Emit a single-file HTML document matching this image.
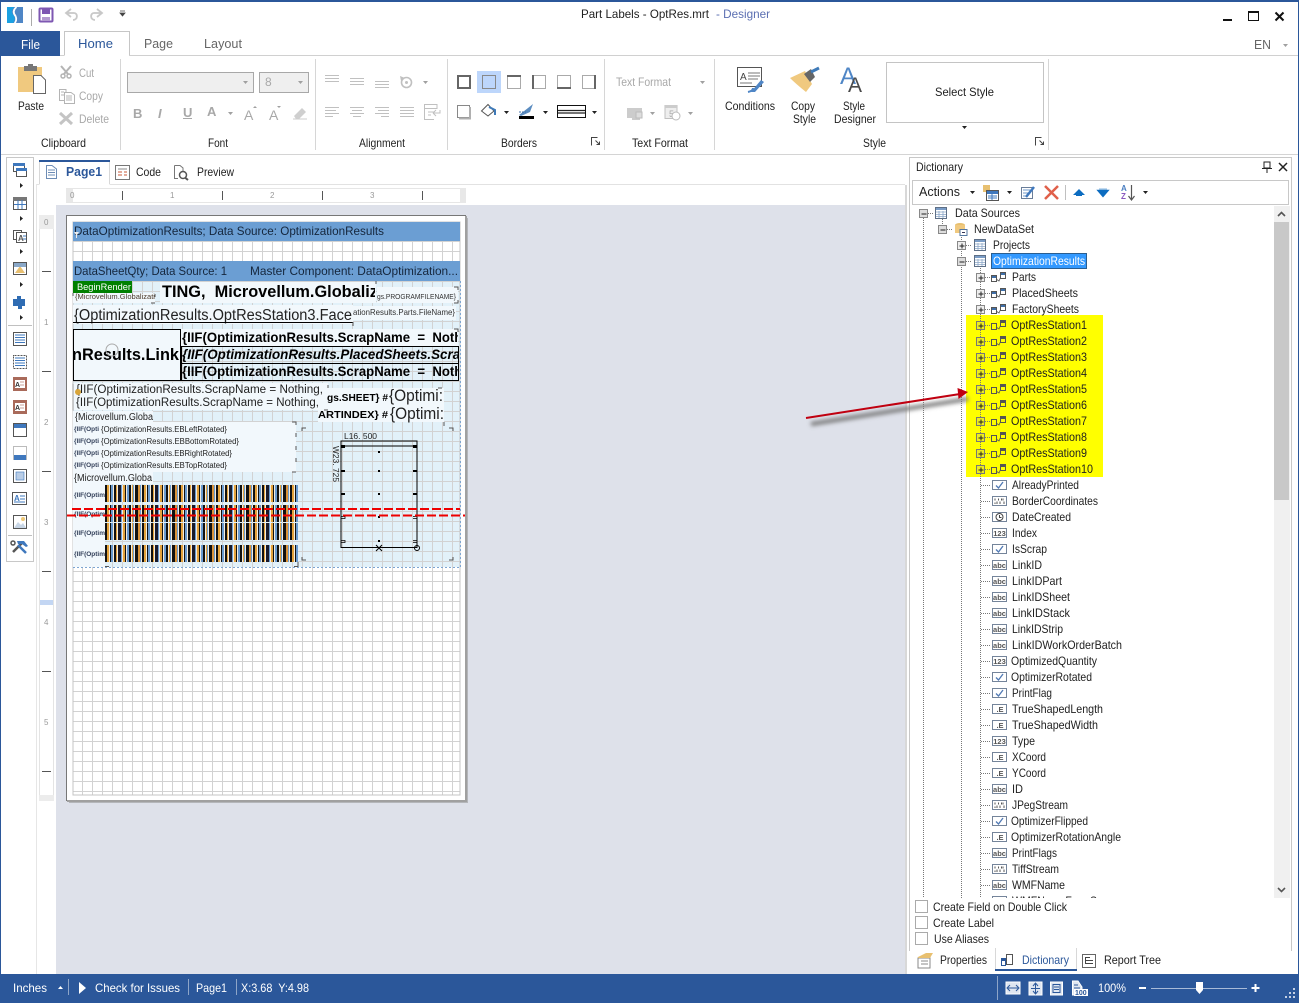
<!DOCTYPE html>
<html><head><meta charset="utf-8"><title>Part Labels - OptRes.mrt - Designer</title>
<style>
html,body{margin:0;padding:0;background:#fff;width:1299px;height:1003px;overflow:hidden}
svg{display:block;position:absolute;left:0;top:0}
text{font-family:"Liberation Sans",sans-serif;font-size:12px;fill:#1e1e1e;white-space:pre}
.g{fill:#a8a8a8}.w{fill:#fff}.b{font-weight:bold}
.gi{fill:none;stroke:#b4b4b4;stroke-width:1}
.dot{stroke:#777;stroke-width:1;stroke-dasharray:1 1;fill:none}
</style></head><body>
<svg width="1299" height="1003" viewBox="0 0 1299 1003" xmlns="http://www.w3.org/2000/svg">
<defs>
<pattern id="grid" x="2" y="1" width="10" height="10" patternUnits="userSpaceOnUse"><path d="M0.5 0V10M0 .5H10" stroke="#d2d2d2" fill="none"/></pattern>
<pattern id="bar" x="105" y="0" width="37" height="80" patternUnits="userSpaceOnUse">
<rect width="37" height="80" fill="#f4ede0"/>
<rect x="0" width="2" height="80" fill="#111"/><rect x="2" width="2" height="80" fill="#e3a23c"/><rect x="5" width="1" height="80" fill="#111"/><rect x="6" width="2" height="80" fill="#6a9bd0"/><rect x="9" width="2" height="80" fill="#111"/><rect x="11" width="1" height="80" fill="#e3a23c"/><rect x="13" width="3" height="80" fill="#1a1a2a"/><rect x="16" width="1" height="80" fill="#6a9bd0"/><rect x="18" width="2" height="80" fill="#e3a23c"/><rect x="20" width="1" height="80" fill="#111"/><rect x="22" width="2" height="80" fill="#6a9bd0"/><rect x="24" width="2" height="80" fill="#111"/><rect x="27" width="1" height="80" fill="#e3a23c"/><rect x="28" width="1" height="80" fill="#6a9bd0"/><rect x="30" width="3" height="80" fill="#111"/><rect x="33" width="2" height="80" fill="#d9933a"/><rect x="35" width="1" height="80" fill="#6a9bd0"/>
</pattern>
<clipPath id="treeclip"><rect x="912" y="205" width="362" height="693"/></clipPath>
<clipPath id="c1"><rect x="160" y="281" width="215" height="22"/></clipPath>
<clipPath id="c2"><rect x="73" y="345" width="106" height="20"/></clipPath>
<clipPath id="c3"><rect x="181" y="329" width="277" height="52"/></clipPath>
<clipPath id="c4"><rect x="316" y="385" width="128" height="40"/></clipPath>
<filter id="bl" x="-10%" y="-200%" width="120%" height="500%"><feGaussianBlur stdDeviation="2"/></filter>

<symbol id="plus" overflow="visible"><rect x="-4" y="-4" width="8" height="8" fill="#eee" stroke="#888"/><path d="M-2 .5H3M.5 -2V3" stroke="#222"/></symbol>
<symbol id="plusy" overflow="visible"><rect x="-4" y="-4" width="8" height="8" fill="#ecec20" stroke="#777"/><path d="M-2 .5H3M.5 -2V3" stroke="#222"/></symbol>
<symbol id="minus" overflow="visible"><rect x="-4" y="-4" width="8" height="8" fill="#ddd" stroke="#888"/><path d="M-2 .5H3" stroke="#222"/></symbol>
<symbol id="tbl" overflow="visible"><rect x=".5" y="-5.5" width="11" height="11" fill="#fff" stroke="#5e6f86"/><rect x="1" y="-5" width="10" height="2" fill="#7a9cc6"/><path d="M1 -1H11M1 1.500H11M1 3.500H11M4 -2V5M8 -2V5" stroke="#8ba6c8" stroke-width=".8"/></symbol>
<symbol id="rel" overflow="visible"><rect x=".5" y="-1.500" width="5" height="6" fill="#fff" stroke="#555"/><rect x="1" y="-1" width="4" height="2" fill="#3f6fa8"/><path d="M5 2L8 4L11 -3" stroke="#555" fill="none" stroke-width=".8"/><rect x="9.500" y="-4.500" width="5" height="6" fill="#fff" stroke="#555"/><rect x="10" y="-4" width="4" height="2" fill="#3f6fa8"/></symbol>
<symbol id="rely" overflow="visible"><rect x=".5" y="-1.500" width="5" height="6" fill="#ffff00" stroke="#555"/><path d="M5 2L8 4L11 -3" stroke="#555" fill="none" stroke-width=".8"/><rect x="9.500" y="-4.500" width="5" height="6" fill="#ffff00" stroke="#555"/><rect x="10" y="-4" width="4" height="2" fill="#555"/></symbol>
<symbol id="fb" overflow="visible"><rect x=".5" y="-4.500" width="14" height="9" fill="#fff" stroke="#74849a"/></symbol>
<symbol id="chk" overflow="visible"><use href="#fb"/><path d="M4 .5L6.500 3L11 -3" stroke="#5079b4" stroke-width="1.300" fill="none"/></symbol>
<symbol id="abc" overflow="visible"><use href="#fb"/><text x="7.500" y="2.800" text-anchor="middle" style="font-size:7.500px;font-weight:bold;fill:#555">abc</text></symbol>
<symbol id="n123" overflow="visible"><use href="#fb"/><text x="7.500" y="2.800" text-anchor="middle" style="font-size:7.500px;font-weight:bold;fill:#555">123</text></symbol>
<symbol id="e" overflow="visible"><use href="#fb"/><text x="8" y="2.800" text-anchor="middle" style="font-size:7.500px;font-weight:bold;fill:#555">.E</text></symbol>
<symbol id="bin" overflow="visible"><use href="#fb"/><path d="M3 -2.500V-.5M6.500 -2.500V-.5M11 -2.500V-.5M5 .5V3M8 .5V3M12 .5V3M3 1.500V3M9.500 -2.500V-.5" stroke="#555"/></symbol>
<symbol id="dt" overflow="visible"><use href="#fb"/><circle cx="7.500" cy="0" r="3.500" fill="#fff" stroke="#444"/><path d="M7.500 -2V.5H9.500" stroke="#444" fill="none"/></symbol>
<symbol id="ca" overflow="visible"><path d="M0 0H5L2.500 3Z" fill="#222"/></symbol>
<symbol id="cag" overflow="visible"><path d="M0 0H5L2.500 3Z" fill="#a0a0a0"/></symbol>
<symbol id="cbtn" overflow="visible"><path d="M0 0V-8H6M4 -5L8 -1M5 -1H8V-4" fill="none" stroke="#444"/></symbol>
</defs>

<!-- window frame -->
<rect x="0" y="0" width="1299" height="2" fill="#2b579a"/>
<rect x="0" y="0" width="1" height="1003" fill="#2b579a"/>
<rect x="1298" y="0" width="1" height="1003" fill="#2b579a"/>

<!-- quick access -->
<rect x="7" y="7" width="16" height="16" fill="#4f86c6"/>
<path d="M7 7H14C11 11 11.500 13 14 16C15.500 19 14 22 13 23H7Z" fill="#1ba1e2"/>
<path d="M16.500 7C13 10 13 13 15.500 16C17 19 16 22 14.500 23" fill="none" stroke="#fff" stroke-width="1.800"/>
<rect x="31" y="9" width="1" height="17" fill="#aaa"/>
<rect x="39.500" y="8.500" width="13" height="13" rx="1" fill="#fff" stroke="#7e57b2" stroke-width="2"/>
<rect x="42" y="9" width="8" height="5" fill="#7e57b2"/><rect x="42" y="17" width="8" height="4" fill="#b39ad0"/>
<path d="M71 9L66 13L71 17M66 13H74C78 13 78 20 73 20" fill="none" stroke="#c8c8c8" stroke-width="1.800"/>
<path d="M97 9L102 13L97 17M102 13H94C90 13 90 20 95 20" fill="none" stroke="#c8c8c8" stroke-width="1.800"/>
<path d="M120 11H125M120 13H125L122.500 16Z" stroke="#444" fill="#444" stroke-width=".8"/>

<text x="581" y="18" textLength="128" lengthAdjust="spacingAndGlyphs">Part Labels - OptRes.mrt</text>
<text x="716" y="18" textLength="54" lengthAdjust="spacingAndGlyphs" style="fill:#5b6fb2">- Designer</text>

<!-- window buttons -->
<rect x="1223" y="19" width="9" height="2" fill="#111"/>
<rect x="1248.500" y="11.500" width="10" height="9" fill="none" stroke="#111"/><rect x="1248" y="11" width="11" height="2" fill="#111"/>
<path d="M1275.500 12.500L1283.500 20.500M1283.500 12.500L1275.500 20.500" stroke="#111" stroke-width="2"/>

<!-- ribbon tabs -->
<path d="M64.500 55.500V31.500H129.500V55.500" fill="#fff" stroke="#c6c6c6"/>
<rect x="60" y="55" width="4" height="1" fill="#d0d0d0"/><rect x="129" y="55" width="1169" height="1" fill="#d0d0d0"/>
<rect x="1" y="31" width="59" height="25" fill="#2b579a"/>
<text x="21" y="49" class="w" textLength="19" lengthAdjust="spacingAndGlyphs" style="font-size:13px">File</text>
<text x="78" y="48" textLength="35" lengthAdjust="spacingAndGlyphs" style="font-size:13px;fill:#2b579a">Home</text>
<text x="144" y="48" textLength="29" lengthAdjust="spacingAndGlyphs" style="font-size:13px;fill:#666">Page</text>
<text x="204" y="48" textLength="38" lengthAdjust="spacingAndGlyphs" style="font-size:13px;fill:#666">Layout</text>
<text x="1254" y="49" textLength="17" lengthAdjust="spacingAndGlyphs" style="font-size:13px;fill:#666">EN</text>
<use href="#cag" x="1283" y="44"/>

<rect x="1" y="154" width="1297" height="1" fill="#d4d4d4"/>
<g fill="#d6d6d6"><rect x="120" y="59" width="1" height="91"/><rect x="315" y="59" width="1" height="91"/><rect x="447" y="59" width="1" height="91"/><rect x="604" y="59" width="1" height="91"/><rect x="714" y="59" width="1" height="91"/><rect x="1048" y="59" width="1" height="91"/></g>

<!-- clipboard group -->
<rect x="18" y="67" width="24" height="25" fill="#f0c97f"/>
<rect x="24" y="66" width="13" height="5" fill="#777"/><rect x="28" y="64" width="5" height="3" fill="#777"/>
<path d="M33.500 75.500H41L45.500 80V93.500H33.500Z" fill="#fff" stroke="#666"/>
<text x="18" y="110" textLength="26" lengthAdjust="spacingAndGlyphs">Paste</text>
<g class="gi"><circle cx="63" cy="76" r="2" stroke-width="1.500"/><circle cx="69" cy="76" r="2" stroke-width="1.500"/><path d="M61 66L68 74M71 66L64 74" stroke-width="2"/></g>
<text x="79" y="77" class="g" textLength="15" lengthAdjust="spacingAndGlyphs">Cut</text>
<g class="gi"><path d="M59.500 89.500H66V100.500H59.500Z"/><path d="M64.500 92.500H71L74.500 95V103.500H64.500Z" fill="#fff"/><path d="M61 92H64M61 95H64M66 96H72M66 98H72M66 100H72"/></g>
<text x="79" y="100" class="g" textLength="24" lengthAdjust="spacingAndGlyphs">Copy</text>
<path d="M60 113L72 124M72 113L60 124" stroke="#c4c4c4" stroke-width="3"/>
<text x="79" y="123" class="g" textLength="30" lengthAdjust="spacingAndGlyphs">Delete</text>
<text x="41" y="147" textLength="45" lengthAdjust="spacingAndGlyphs">Clipboard</text>

<!-- font group -->
<rect x="127.500" y="72.500" width="126" height="20" fill="#efefef" stroke="#a8a8a8"/>
<use href="#cag" x="243" y="81"/>
<rect x="259.500" y="72.500" width="49" height="20" fill="#efefef" stroke="#a8a8a8"/>
<text x="265" y="86" class="g">8</text><use href="#cag" x="298" y="81"/>
<text x="133" y="118" class="g b" style="font-size:13px">B</text>
<text x="158" y="118" class="g b" style="font-size:13px;font-style:italic">I</text>
<text x="183" y="117" class="g b" style="font-size:13px">U</text><rect x="183" y="118" width="9" height="1" fill="#a8a8a8"/>
<text x="207" y="116" class="g b" style="font-size:13px">A</text><use href="#cag" x="228" y="112"/>
<text x="244" y="120" class="g" style="font-size:14px">A</text><path d="M253 108L255 106L257 108Z" fill="#a0a0a0"/>
<text x="269" y="120" class="g" style="font-size:14px">A</text><path d="M277 106L279 108L281 106Z" fill="#a0a0a0"/>
<path d="M294 116L302 108L306 112L299 119H296Z" fill="#cfcfcf"/><path d="M293 119H307" stroke="#ccc"/>
<text x="208" y="147" textLength="20" lengthAdjust="spacingAndGlyphs">Font</text>

<!-- alignment group -->
<g stroke="#c0c0c0">
<path d="M325 75.500H339M325 78.500H339M325 81.500H339"/>
<path d="M350 78.500H364M350 81.500H364M350 84.500H364"/>
<path d="M375 81.500H389M375 84.500H389M375 87.500H389"/>
<path d="M325 107.500H339M325 110.500H336M325 113.500H339M325 116.500H333"/>
<path d="M350 107.500H364M352 110.500H362M350 113.500H364M353 116.500H361"/>
<path d="M375 107.500H389M378 110.500H389M375 113.500H389M381 116.500H389"/>
<path d="M400 107.500H414M400 110.500H414M400 113.500H414M400 116.500H414"/>
</g>
<circle cx="406.500" cy="82.500" r="5" fill="none" stroke="#c0c0c0" stroke-width="1.600"/><circle cx="406.500" cy="82.500" r="1.500" fill="#c0c0c0"/><path d="M400 76L405 78L401 81Z" fill="#c0c0c0"/>
<use href="#cag" x="423" y="81"/>
<path d="M424.500 104.500H437V108.500H424.500ZM424.500 108.500V119.500H434M428 112H434M428 115H431M433 113H440V110M433 113L436 110M433 113L436 116" fill="none" stroke="#c0c0c0"/>
<text x="359" y="147" textLength="46" lengthAdjust="spacingAndGlyphs">Alignment</text>

<!-- borders group -->
<rect x="477" y="71" width="24" height="22" fill="#bdd6fb"/>
<rect x="458" y="76" width="12" height="12" fill="none" stroke="#666" stroke-width="2"/>
<rect x="482.500" y="75.500" width="13" height="13" fill="none" stroke="#888"/>
<rect x="507.500" y="75.500" width="13" height="13" fill="none" stroke="#aaa"/><rect x="507" y="75" width="14" height="2" fill="#666"/>
<rect x="532.500" y="75.500" width="13" height="13" fill="none" stroke="#aaa"/><rect x="532" y="75" width="2" height="14" fill="#666"/>
<rect x="557.500" y="75.500" width="13" height="13" fill="none" stroke="#aaa"/><rect x="557" y="87" width="14" height="2" fill="#666"/>
<rect x="582.500" y="75.500" width="13" height="13" fill="none" stroke="#aaa"/><rect x="594" y="75" width="2" height="14" fill="#666"/>
<rect x="457.500" y="105.500" width="12" height="12" fill="none" stroke="#888"/><path d="M470 107V118.500H459" fill="none" stroke="#b0b0b0" stroke-width="2"/>
<path d="M481.500 111L488 104.500L494 111L488 116Z" fill="#fff" stroke="#555"/><path d="M489 107L495 110V115" fill="none" stroke="#3f7ab8" stroke-width="2"/>
<use href="#ca" x="504" y="111"/>
<path d="M519 115L528 108L533 104L530 112L521 116Z" fill="#5b8cc0"/><path d="M519 112H526" stroke="#3f6fa8" stroke-dasharray="2 1"/>
<rect x="519" y="116" width="15" height="3" fill="#000"/>
<use href="#ca" x="543" y="111"/>
<rect x="557.500" y="105.500" width="28" height="12" fill="#fff" stroke="#111"/><path d="M558 110.500H585M558 113H585" stroke="#222" stroke-width="1.200"/>
<use href="#ca" x="592" y="111"/>
<text x="501" y="147" textLength="36" lengthAdjust="spacingAndGlyphs">Borders</text>
<use href="#cbtn" x="591.500" y="145.500"/>

<!-- text format -->
<text x="616" y="86" class="g" textLength="55" lengthAdjust="spacingAndGlyphs">Text Format</text>
<use href="#cag" x="700" y="81"/>
<rect x="627" y="108" width="15" height="10" fill="#ccc"/><path d="M632 119H640" stroke="#ccc" stroke-width="2"/><rect x="636" y="112" width="6" height="6" fill="#ddd" stroke="#bbb"/>
<use href="#cag" x="650" y="112"/>
<rect x="665" y="105.500" width="12" height="13" fill="#eee" stroke="#c0c0c0"/><rect x="665" y="105" width="12" height="3" fill="#ccc"/><text x="669" y="117" style="font-size:9px;fill:#aaa">5</text><circle cx="676" cy="116" r="4" fill="#fff" stroke="#bbb"/>
<use href="#cag" x="688" y="112"/>
<text x="632" y="147" textLength="56" lengthAdjust="spacingAndGlyphs">Text Format</text>

<!-- style group -->
<rect x="737.500" y="67.500" width="24" height="19" fill="#fff" stroke="#555"/>
<text x="740" y="80" style="font-size:10px;fill:#444">A</text><path d="M748 73H760M748 76H760M748 79H758M740 83H752" stroke="#777"/>
<path d="M751 92L761 80L764 82L755 92Z" fill="#4f86c6"/><path d="M748 92Q753 91 753 88" stroke="#4f86c6" fill="none" stroke-width="2"/>
<text x="725" y="110" textLength="50" lengthAdjust="spacingAndGlyphs">Conditions</text>
<path d="M790 78L805 71L812 84L806 92Q796 84 790 78Z" fill="#f0c97f"/>
<path d="M804 74L811 69L815 77L810 82Z" fill="#666"/><path d="M811 72L819 68" stroke="#3f7ab8" stroke-width="3"/>
<text x="791" y="110" textLength="24" lengthAdjust="spacingAndGlyphs">Copy</text>
<text x="793" y="123" textLength="23" lengthAdjust="spacingAndGlyphs">Style</text>
<text x="840" y="84" style="font-size:24px;fill:#4f86c6">A</text>
<text x="848" y="92" style="font-size:21px;fill:#4a4a4a">A</text>
<text x="843" y="110" textLength="22" lengthAdjust="spacingAndGlyphs">Style</text>
<text x="834" y="123" textLength="42" lengthAdjust="spacingAndGlyphs">Designer</text>
<rect x="886.500" y="62.500" width="157" height="60" fill="#fff" stroke="#c4c4c4"/>
<text x="935" y="96" textLength="59" lengthAdjust="spacingAndGlyphs">Select Style</text>
<use href="#ca" x="962" y="126"/>
<text x="863" y="147" textLength="23" lengthAdjust="spacingAndGlyphs">Style</text>
<use href="#cbtn" x="1035.500" y="145.500"/>

<!-- left vertical tool strip -->
<rect x="6.500" y="157.500" width="27" height="404" fill="#fff" stroke="#c8c8c8"/>
<rect x="8" y="325" width="24" height="1" fill="#c0c0c0"/><rect x="8" y="535" width="24" height="1" fill="#c0c0c0"/>
<g fill="#222"><path d="M20 183L23 185.500L20 188Z"/><path d="M20 216L23 218.500L20 221Z"/><path d="M20 249L23 251.500L20 254Z"/><path d="M20 282L23 284.500L20 287Z"/><path d="M20 315L23 317.500L20 320Z"/></g>
<rect x="13.500" y="163.500" width="11" height="8" fill="#fff" stroke="#555"/><rect x="13" y="163" width="12" height="3" fill="#3f78bd"/>
<rect x="16.500" y="168.500" width="10" height="8" fill="#fff" stroke="#555"/><rect x="16" y="168" width="11" height="3" fill="#3f78bd"/>
<rect x="13.500" y="197.500" width="13" height="12" fill="#fff" stroke="#555"/><rect x="13" y="197" width="14" height="4" fill="#777"/><path d="M14 204.500H26M18 200V209M22 200V209" stroke="#3f78bd"/>
<rect x="13.500" y="230.500" width="8" height="9" fill="#fff" stroke="#555"/><rect x="16.500" y="232.500" width="10" height="10" fill="#fff" stroke="#555"/><text x="18" y="241" style="font-size:8px;font-weight:bold;fill:#555">A</text><path d="M23 236H26M23 239H26" stroke="#3f78bd"/>
<rect x="13.500" y="262.500" width="13" height="12" fill="#fff" stroke="#555"/><path d="M15 273L20 266L25 273Z" fill="#e8bf70"/><rect x="14" y="263" width="12" height="4" fill="#8aa8c8"/>
<path d="M13 299H17V296H21V299H25V306H22V309H18V306H13Z" fill="#2f6cb3"/>
<g>
<rect x="13.500" y="332.500" width="13" height="13" fill="#fff" stroke="#555"/><path d="M15 335H25M15 337.500H25M15 340H25M15 342.500H25" stroke="#3f78bd"/>
<rect x="13.500" y="355.500" width="13" height="13" fill="#fff" stroke="#555" stroke-dasharray="1 .5"/><path d="M15 358H25M15 360.500H25M15 363H25M15 365.500H25" stroke="#3f78bd"/>
<rect x="13" y="377" width="14" height="14" fill="#a96a5a"/><rect x="15" y="380" width="10" height="8" fill="#fff"/><text x="15" y="387" style="font-size:7px;font-weight:bold;fill:#333">A</text><path d="M20 382H24M20 385H24" stroke="#c9a098"/>
<rect x="13" y="400" width="14" height="14" fill="#a96a5a"/><rect x="15" y="403" width="10" height="8" fill="#fff"/><text x="15" y="410" style="font-size:7px;font-weight:bold;fill:#333">A</text><path d="M20 405H24M20 408H24" stroke="#c9a098"/>
<rect x="13.500" y="423.500" width="13" height="13" fill="#fff" stroke="#555"/><rect x="14" y="424" width="12" height="4" fill="#3f78bd"/>
<rect x="13.500" y="446.500" width="13" height="13" fill="#fff" stroke="#bbb"/><rect x="14" y="455" width="12" height="5" fill="#3f78bd"/>
<rect x="13.500" y="469.500" width="13" height="13" fill="#fff" stroke="#555"/><rect x="16" y="472" width="8" height="8" fill="#b9cde6" stroke="#3f78bd" stroke-width=".6"/>
<rect x="12.500" y="492.500" width="14" height="12" fill="#fff" stroke="#555"/><text x="14" y="501" style="font-size:8px;font-weight:bold;fill:#3f78bd">A</text><path d="M20 496H25M20 499H25M14 502H25" stroke="#3f78bd"/>
<rect x="13.500" y="515.500" width="13" height="13" fill="#fff" stroke="#555"/><path d="M14 528L18 522L21 525L23 523L26 528Z" fill="#c8d6e6"/><circle cx="23" cy="519" r="2" fill="#eec878"/>
<path d="M13 552L22 543" stroke="#555" stroke-width="2.500"/><path d="M18 545L26 553" stroke="#3f78bd" stroke-width="2.500"/><path d="M17 541H24L28 546L26 547L22 544H18Z" fill="#3f78bd"/><circle cx="13" cy="543" r="2" fill="none" stroke="#555" stroke-width="1.500"/>
</g>

<!-- doc tabs -->
<rect x="36" y="184" width="869" height="1" fill="#e2e2e2"/>
<rect x="36" y="184" width="1" height="790" fill="#e6e6e6"/>
<path d="M39.500 184V161H109.500V184" fill="#fff" stroke="#d8d8d8"/>
<rect x="39" y="160" width="71" height="2" fill="#2b579a"/>
<rect x="39.500" y="184" width="70" height="1" fill="#fff"/>
<path d="M46.500 165.500H52L56.500 169V178.500H46.500Z" fill="#fff" stroke="#6d8cb5"/><path d="M48 170H55M48 172.500H55M48 175H55" stroke="#6d8cb5"/>
<text x="66" y="176" class="b" textLength="36" lengthAdjust="spacingAndGlyphs" style="fill:#2b579a;font-size:12.500px">Page1</text>
<rect x="115.500" y="165.500" width="14" height="14" fill="#fff" stroke="#777"/><path d="M118 169H127" stroke="#888"/><path d="M118 172H122M124 172H127M118 175H122M124 175H127" stroke="#c85a3a"/>
<text x="136" y="176" textLength="25" lengthAdjust="spacingAndGlyphs">Code</text>
<path d="M174.500 165.500H180L183 168V171M174.500 165.500V178.500H178" fill="none" stroke="#777"/><circle cx="183" cy="175" r="3.500" fill="#fff" stroke="#555" stroke-width="1.500"/><path d="M185.500 178L188 180" stroke="#555" stroke-width="2"/>
<text x="197" y="176" textLength="37" lengthAdjust="spacingAndGlyphs">Preview</text>

<!-- horizontal ruler -->
<rect x="66" y="188" width="400" height="15" fill="#fff"/>
<rect x="66" y="188" width="7" height="15" fill="#e8e8e8"/>
<rect x="66" y="188" width="400" height="1" fill="#e6e6e6"/><rect x="66" y="202" width="400" height="1" fill="#e6e6e6"/>
<rect x="460" y="188" width="6" height="15" fill="#e8e8e8"/>
<g fill="#555"><rect x="122" y="191" width="1" height="9"/><rect x="222" y="191" width="1" height="9"/><rect x="322" y="191" width="1" height="9"/><rect x="422" y="191" width="1" height="9"/></g>
<text x="70" y="198" style="font-size:8px;fill:#999">0</text><text x="170" y="198" style="font-size:8px;fill:#999">1</text><text x="270" y="198" style="font-size:8px;fill:#999">2</text><text x="370" y="198" style="font-size:8px;fill:#999">3</text>

<!-- canvas -->
<rect x="56" y="205" width="849" height="769" fill="#dee1ea"/>
<rect x="905" y="185" width="2" height="789" fill="#d8d8d8"/>
<!-- vertical ruler -->
<rect x="39" y="215" width="14" height="586" fill="#fff"/>
<rect x="39" y="215" width="1" height="586" fill="#e4e4e4"/><rect x="53" y="215" width="1" height="586" fill="#e4e4e4"/>
<rect x="39" y="215" width="15" height="14" fill="#ececec"/><rect x="39" y="795" width="15" height="6" fill="#ececec"/>
<rect x="40" y="600" width="13" height="5" fill="#c3d6f3"/>
<g fill="#555"><rect x="42" y="271" width="9" height="1"/><rect x="42" y="371" width="9" height="1"/><rect x="42" y="471" width="9" height="1"/><rect x="42" y="571" width="9" height="1"/><rect x="42" y="671" width="9" height="1"/><rect x="42" y="771" width="9" height="1"/></g>
<text x="44" y="225" style="font-size:8px;fill:#999">0</text><text x="44" y="325" style="font-size:8px;fill:#999">1</text><text x="44" y="425" style="font-size:8px;fill:#999">2</text><text x="44" y="525" style="font-size:8px;fill:#999">3</text><text x="44" y="625" style="font-size:8px;fill:#999">4</text><text x="44" y="725" style="font-size:8px;fill:#999">5</text>

<!-- page -->
<rect x="69" y="218" width="399" height="585" fill="#b4b6ba"/>
<rect x="66.500" y="215.500" width="399" height="585" fill="#fff" stroke="#777"/>
<rect x="465" y="216" width="2" height="586" fill="#a0a0a0"/><rect x="67" y="800" width="400" height="2" fill="#a0a0a0"/>
<rect x="73" y="222" width="387" height="573" fill="#fff"/>
<rect x="73" y="281" width="387" height="286" fill="#e2f1f9"/>
<rect x="73" y="222" width="387" height="573" fill="url(#grid)"/>
<rect x="73" y="222" width="387" height="573" fill="none" stroke="#c4c4c4"/>
<rect x="73" y="222" width="387" height="19" fill="#6b9ed3"/>
<rect x="73" y="261" width="387" height="20" fill="#6b9ed3"/>
<text x="74" y="235" textLength="310" lengthAdjust="spacingAndGlyphs" style="fill:#15263c">DataOptimizationResults; Data Source: OptimizationResults</text>
<path d="M74 232H79L77 235V238L76 238V235Z" fill="#eee"/>
<text x="74" y="275" textLength="153" lengthAdjust="spacingAndGlyphs" style="fill:#15263c">DataSheetQty; Data Source: 1</text>
<text x="250" y="275" textLength="208" lengthAdjust="spacingAndGlyphs" style="fill:#15263c">Master Component: DataOptimization...</text>
<path d="M460.500 281V567.500H73" fill="none" stroke="#7ea6d2" stroke-dasharray="2 2"/>

<!-- light text backgrounds -->
<g fill="#f2f8fc">
<rect x="160" y="282" width="216" height="21"/><rect x="73" y="305" width="280" height="19"/><rect x="353" y="306" width="103" height="14"/><rect x="73" y="329" width="107" height="52"/><rect x="181" y="329" width="277" height="17"/><rect x="73" y="383" width="255" height="27"/><rect x="73" y="411" width="80" height="11"/><rect x="73" y="422" width="223" height="50"/><rect x="73" y="472" width="80" height="12"/><rect x="73" y="484" width="32" height="83"/><rect x="318" y="388" width="126" height="34"/><rect x="377" y="287" width="81" height="16"/><rect x="73" y="293" width="82" height="10"/>
</g>

<rect x="73" y="281" width="59" height="12" fill="#008000"/>
<text x="77" y="290" class="w" textLength="54" lengthAdjust="spacingAndGlyphs" style="font-size:9.500px">BeginRender</text>
<text x="75" y="299" textLength="80" lengthAdjust="spacingAndGlyphs" style="font-size:7.500px;fill:#4a3a2a">{Microvellum.Globalizati</text>
<g clip-path="url(#c1)"><text x="162" y="297" class="b" textLength="255" lengthAdjust="spacingAndGlyphs" style="font-size:16.500px;fill:#000">TING,  Microvellum.Globalization</text></g>
<text x="377" y="299" textLength="79" lengthAdjust="spacingAndGlyphs" style="font-size:7.500px;fill:#333">gs.PROGRAMFILENAME}</text>
<text x="74" y="320" textLength="278" lengthAdjust="spacingAndGlyphs" style="font-size:15.500px;fill:#222">{OptimizationResults.OptResStation3.Face</text>
<rect x="73" y="322" width="280" height="1" fill="#000"/>
<text x="353" y="315" textLength="102" lengthAdjust="spacingAndGlyphs" style="font-size:8.500px;fill:#333">ationResults.Parts.FileName}</text>

<rect x="73.500" y="329.500" width="107" height="51" fill="none" stroke="#000"/>
<g clip-path="url(#c2)"><text x="72" y="360" class="b" textLength="107" lengthAdjust="spacingAndGlyphs" style="font-size:17px;fill:#000">nResults.Link</text></g>
<circle cx="112" cy="350" r="6" fill="none" stroke="#aaa"/>
<path d="M181.500 346.500H458.500V380.500H181.500ZM181.500 363.500H458.500" fill="none" stroke="#000"/>
<g clip-path="url(#c3)">
<text x="182" y="342" class="b" textLength="300" lengthAdjust="spacingAndGlyphs" style="font-size:14px;fill:#000">{IIF(OptimizationResults.ScrapName  =  Nothing</text>
<text x="182" y="359" class="b" textLength="296" lengthAdjust="spacingAndGlyphs" style="font-size:14px;font-style:italic;fill:#000">{IIF(OptimizationResults.PlacedSheets.ScrapN</text>
<text x="182" y="376" class="b" textLength="300" lengthAdjust="spacingAndGlyphs" style="font-size:14px;fill:#000">{IIF(OptimizationResults.ScrapName  =  Nothing</text>
</g>
<text x="76" y="393" textLength="247" lengthAdjust="spacingAndGlyphs" style="font-size:11.500px;fill:#222">{IIF(OptimizationResults.ScrapName = Nothing,</text>
<text x="76" y="406" textLength="243" lengthAdjust="spacingAndGlyphs" style="font-size:11.500px;fill:#222">{IIF(OptimizationResults.ScrapName = Nothing,</text>
<path d="M73 383.500V410.500" stroke="#999"/>
<circle cx="78" cy="392" r="3" fill="#d9a53a"/>
<g clip-path="url(#c4)">
<text x="327" y="401" class="b" textLength="61" lengthAdjust="spacingAndGlyphs" style="font-size:10.500px;fill:#000">gs.SHEET} #</text>
<text x="318" y="418" class="b" textLength="70" lengthAdjust="spacingAndGlyphs" style="font-size:10.500px;fill:#000">ARTINDEX} #</text>
<text x="389" y="401" textLength="54" lengthAdjust="spacingAndGlyphs" style="font-size:16.500px;fill:#222">{Optimi:</text>
<text x="390" y="419" textLength="54" lengthAdjust="spacingAndGlyphs" style="font-size:16.500px;fill:#222">{Optimi:</text>
</g>
<text x="75" y="420" textLength="78" lengthAdjust="spacingAndGlyphs" style="font-size:10px;fill:#222">{Microvellum.Globa</text>
<text x="74" y="481" textLength="78" lengthAdjust="spacingAndGlyphs" style="font-size:10px;fill:#222">{Microvellum.Globa</text>
<text x="74" y="431" class="b" textLength="25" lengthAdjust="spacingAndGlyphs" style="font-size:6.500px;fill:#33405a">{IIF(Opti</text>
<text x="74" y="443" class="b" textLength="25" lengthAdjust="spacingAndGlyphs" style="font-size:6.500px;fill:#33405a">{IIF(Opti</text>
<text x="74" y="455" class="b" textLength="25" lengthAdjust="spacingAndGlyphs" style="font-size:6.500px;fill:#33405a">{IIF(Opti</text>
<text x="74" y="467" class="b" textLength="25" lengthAdjust="spacingAndGlyphs" style="font-size:6.500px;fill:#33405a">{IIF(Opti</text>
<text x="74" y="497" class="b" textLength="31" lengthAdjust="spacingAndGlyphs" style="font-size:6.500px;fill:#33405a">{IIF(Optim</text>
<text x="74" y="516" class="b" textLength="31" lengthAdjust="spacingAndGlyphs" style="font-size:6.500px;fill:#33405a">{IIF(Optim</text>
<text x="74" y="535" class="b" textLength="31" lengthAdjust="spacingAndGlyphs" style="font-size:6.500px;fill:#33405a">{IIF(Optim</text>
<text x="74" y="556" class="b" textLength="31" lengthAdjust="spacingAndGlyphs" style="font-size:6.500px;fill:#33405a">{IIF(Optim</text>
<text x="101" y="432" textLength="126" lengthAdjust="spacingAndGlyphs" style="font-size:8px;fill:#222">{OptimizationResults.EBLeftRotated}</text>
<text x="101" y="444" textLength="138" lengthAdjust="spacingAndGlyphs" style="font-size:8px;fill:#222">{OptimizationResults.EBBottomRotated}</text>
<text x="101" y="456" textLength="131" lengthAdjust="spacingAndGlyphs" style="font-size:8px;fill:#222">{OptimizationResults.EBRightRotated}</text>
<text x="101" y="468" textLength="126" lengthAdjust="spacingAndGlyphs" style="font-size:8px;fill:#222">{OptimizationResults.EBTopRotated}</text>

<!-- selection corner marks -->
<path d="M296 425V422H292M296 433V437M296 446V450M296 458V462M296 472H292M302 431V428H306M453 431V428H449M302 557V560H306M453 557V560H449M155 294V297M155 303H151M376 281V284M458 290V287H454M458 300V303H454M73 293V296M353 322V326M458 332V329H454M328 385V388M328 410H324M442 388H438M444 422V426" stroke="#555" fill="none"/>

<!-- barcodes -->
<rect x="105" y="485" width="193" height="17" fill="url(#bar)"/>
<rect x="105" y="505" width="193" height="17" fill="url(#bar)"/>
<rect x="105" y="523" width="193" height="17" fill="url(#bar)"/>
<rect x="105" y="545" width="193" height="17" fill="url(#bar)"/>
<path d="M105 566.500H109M298 562V566.500H294" stroke="#555" fill="none"/>

<!-- part drawing -->
<text x="344" y="439" textLength="33" lengthAdjust="spacingAndGlyphs" style="font-size:8.500px;fill:#222">L16. 500</text>
<text transform="translate(333,446) rotate(90)" textLength="36" lengthAdjust="spacingAndGlyphs" style="font-size:8.500px;fill:#222">W23. 725</text>
<rect x="341" y="441" width="76" height="106.500" fill="none" stroke="#000"/>
<path d="M341 446H417" stroke="#000"/>
<g fill="#000">
<rect x="341" y="445" width="4" height="3"/><rect x="413" y="445" width="4" height="3"/>
<rect x="341" y="470" width="4" height="2"/><rect x="413" y="470" width="4" height="2"/>
<rect x="341" y="493" width="4" height="2"/><rect x="413" y="493" width="4" height="2"/>
<rect x="378" y="451" width="2" height="2"/><rect x="378" y="470" width="2" height="2"/><rect x="378" y="493" width="2" height="2"/><rect x="378" y="516" width="2" height="2"/><rect x="378" y="540" width="2" height="2"/>
</g>
<path d="M341.500 516.500H345V518.500H341.500M413 516.500H417V518.500H413M341.500 540.500H345V542.500H341.500M413 540.500H417V542.500H413" fill="none" stroke="#000" stroke-width=".8"/>
<path d="M376 545L382 551M382 545L376 551" stroke="#000"/>
<circle cx="417" cy="548" r="2.500" fill="none" stroke="#000"/>

<!-- red dashes -->
<path d="M72 509H460" stroke="#ee0000" stroke-width="2" stroke-dasharray="9 3"/>
<path d="M67 515.500H465" stroke="#ee0000" stroke-width="2" stroke-dasharray="9 3"/>

<!-- dictionary panel -->
<path d="M909.500 974V157.500H1291.500V974" fill="#fff" stroke="#c8c8c8"/>
<text x="916" y="171" textLength="47" lengthAdjust="spacingAndGlyphs">Dictionary</text>
<rect x="1264" y="162" width="6" height="6" fill="none" stroke="#222"/><path d="M1262 168.500H1272M1267 168V173" stroke="#222"/>
<path d="M1279 163L1287 171M1287 163L1279 171" stroke="#222" stroke-width="1.500"/>
<rect x="912.500" y="180.500" width="376" height="24" fill="#fff" stroke="#c8c8c8"/>
<text x="919" y="196" textLength="41" lengthAdjust="spacingAndGlyphs" style="font-size:12.500px">Actions</text>
<use href="#ca" x="970" y="191"/>
<rect x="983" y="185" width="7" height="7" fill="#e8c070"/>
<rect x="986.500" y="190.500" width="12" height="10" fill="#fff" stroke="#555"/><rect x="987" y="191" width="11" height="3" fill="#3f78bd"/><path d="M988 196H997M988 198H997M992 194V200" stroke="#3f78bd"/>
<use href="#ca" x="1007" y="191"/>
<rect x="1021.500" y="187.500" width="11" height="11" fill="#fff" stroke="#6a7e9a"/><path d="M1023 190H1030M1023 193H1028M1023 196H1028" stroke="#6d97c8"/><path d="M1026 197L1034 187" stroke="#3f78bd" stroke-width="2.500"/>
<path d="M1045 186L1058 199M1058 186L1045 199" stroke="#e0604a" stroke-width="2.500"/>
<rect x="1065" y="185" width="1" height="15" fill="#c0c0c0"/>
<path d="M1073 195L1079 189L1085 195H1082V196H1076V195Z" fill="#0c6cc0"/>
<path d="M1097 190H1109L1103 197ZM1099 189H1107" fill="#0c6cc0" stroke="#0c6cc0" stroke-width=".6"/>
<text x="1121" y="191" style="font-size:8px;font-weight:bold;fill:#4a7ec0">A</text><text x="1121" y="199" style="font-size:8px;font-weight:bold;fill:#8a5abf">Z</text>
<path d="M1131.500 185V199M1128.500 196L1131.500 200L1134.500 196" stroke="#555" fill="none" stroke-width="1.200"/>
<use href="#ca" x="1143" y="191"/>

<!-- scrollbar -->
<rect x="1274" y="206" width="16" height="692" fill="#f0f0f0"/>
<rect x="1274" y="222" width="15" height="278" fill="#c8c8c8"/>
<path d="M1278 216L1281.500 212.500L1285 216" fill="none" stroke="#555" stroke-width="1.600"/>
<path d="M1278 888L1281.500 891.500L1285 888" fill="none" stroke="#555" stroke-width="1.600"/>

<!-- tree -->
<rect x="966" y="315" width="137" height="162" fill="#ffff00"/>
<rect x="991" y="253" width="96" height="16" fill="#3399ff"/>
<rect x="991.500" y="253.500" width="95" height="15" fill="none" stroke="#222" stroke-dasharray="1 1"/>
<g clip-path="url(#treeclip)">
<path class="dot" d="M923.500 218V898M942.500 219V229M961.500 235V898M980.500 266V898M928 213.500H934M947 229.500H953M966 245.500H972M966 261.500H972"/>
<use href="#minus" x="923.500" y="213.500"/><use href="#tbl" x="935" y="213"/>
<text x="955" y="217" textLength="65" lengthAdjust="spacingAndGlyphs">Data Sources</text>
<use href="#minus" x="942.500" y="229.500"/>
<ellipse cx="960" cy="225" rx="5" ry="2" fill="#e8c070"/><rect x="955" y="225" width="10" height="8" fill="#f0c97f"/><rect x="960" y="229.500" width="7" height="6" fill="#fff" stroke="#5577a0"/><path d="M962 232.500H965" stroke="#335"/>
<text x="974" y="233" textLength="60" lengthAdjust="spacingAndGlyphs">NewDataSet</text>
<use href="#plus" x="961.500" y="245.500"/><use href="#tbl" x="974" y="245"/>
<text x="993" y="249" textLength="37" lengthAdjust="spacingAndGlyphs">Projects</text>
<use href="#minus" x="961.500" y="261.500"/><use href="#tbl" x="974" y="261"/>
<text x="993" y="265" class="w" textLength="92" lengthAdjust="spacingAndGlyphs">OptimizationResults</text>

<g transform="translate(0,277)"><path class="dot" d="M985 .5H991"/><use href="#plus" x="980.500" y=".5"/><use href="#rel" x="991" y="0"/><text x="1012" y="4" textLength="24" lengthAdjust="spacingAndGlyphs">Parts</text></g>
<g transform="translate(0,293)"><path class="dot" d="M985 .5H991"/><use href="#plus" x="980.500" y=".5"/><use href="#rel" x="991" y="0"/><text x="1012" y="4" textLength="66" lengthAdjust="spacingAndGlyphs">PlacedSheets</text></g>
<g transform="translate(0,309)"><path class="dot" d="M985 .5H991"/><use href="#plus" x="980.500" y=".5"/><use href="#rel" x="991" y="0"/><text x="1012" y="4" textLength="67" lengthAdjust="spacingAndGlyphs">FactorySheets</text></g>
<g transform="translate(0,325)"><path class="dot" d="M985 .5H991"/><use href="#plusy" x="980.500" y=".5"/><use href="#rely" x="991" y="0"/><text x="1011" y="4" textLength="76" lengthAdjust="spacingAndGlyphs">OptResStation1</text></g>
<g transform="translate(0,341)"><path class="dot" d="M985 .5H991"/><use href="#plusy" x="980.500" y=".5"/><use href="#rely" x="991" y="0"/><text x="1011" y="4" textLength="76" lengthAdjust="spacingAndGlyphs">OptResStation2</text></g>
<g transform="translate(0,357)"><path class="dot" d="M985 .5H991"/><use href="#plusy" x="980.500" y=".5"/><use href="#rely" x="991" y="0"/><text x="1011" y="4" textLength="76" lengthAdjust="spacingAndGlyphs">OptResStation3</text></g>
<g transform="translate(0,373)"><path class="dot" d="M985 .5H991"/><use href="#plusy" x="980.500" y=".5"/><use href="#rely" x="991" y="0"/><text x="1011" y="4" textLength="76" lengthAdjust="spacingAndGlyphs">OptResStation4</text></g>
<g transform="translate(0,389)"><path class="dot" d="M985 .5H991"/><use href="#plusy" x="980.500" y=".5"/><use href="#rely" x="991" y="0"/><text x="1011" y="4" textLength="76" lengthAdjust="spacingAndGlyphs">OptResStation5</text></g>
<g transform="translate(0,405)"><path class="dot" d="M985 .5H991"/><use href="#plusy" x="980.500" y=".5"/><use href="#rely" x="991" y="0"/><text x="1011" y="4" textLength="76" lengthAdjust="spacingAndGlyphs">OptResStation6</text></g>
<g transform="translate(0,421)"><path class="dot" d="M985 .5H991"/><use href="#plusy" x="980.500" y=".5"/><use href="#rely" x="991" y="0"/><text x="1011" y="4" textLength="76" lengthAdjust="spacingAndGlyphs">OptResStation7</text></g>
<g transform="translate(0,437)"><path class="dot" d="M985 .5H991"/><use href="#plusy" x="980.500" y=".5"/><use href="#rely" x="991" y="0"/><text x="1011" y="4" textLength="76" lengthAdjust="spacingAndGlyphs">OptResStation8</text></g>
<g transform="translate(0,453)"><path class="dot" d="M985 .5H991"/><use href="#plusy" x="980.500" y=".5"/><use href="#rely" x="991" y="0"/><text x="1011" y="4" textLength="76" lengthAdjust="spacingAndGlyphs">OptResStation9</text></g>
<g transform="translate(0,469)"><path class="dot" d="M985 .5H991"/><use href="#plusy" x="980.500" y=".5"/><use href="#rely" x="991" y="0"/><text x="1011" y="4" textLength="82" lengthAdjust="spacingAndGlyphs">OptResStation10</text></g>

<g transform="translate(0,485)"><path class="dot" d="M981 .5H991"/><use href="#chk" x="992" y="0"/><text x="1012" y="4" textLength="67" lengthAdjust="spacingAndGlyphs">AlreadyPrinted</text></g>
<g transform="translate(0,501)"><path class="dot" d="M981 .5H991"/><use href="#bin" x="992" y="0"/><text x="1012" y="4" textLength="86" lengthAdjust="spacingAndGlyphs">BorderCoordinates</text></g>
<g transform="translate(0,517)"><path class="dot" d="M981 .5H991"/><use href="#dt" x="992" y="0"/><text x="1012" y="4" textLength="59" lengthAdjust="spacingAndGlyphs">DateCreated</text></g>
<g transform="translate(0,533)"><path class="dot" d="M981 .5H991"/><use href="#n123" x="992" y="0"/><text x="1012" y="4" textLength="25" lengthAdjust="spacingAndGlyphs">Index</text></g>
<g transform="translate(0,549)"><path class="dot" d="M981 .5H991"/><use href="#chk" x="992" y="0"/><text x="1012" y="4" textLength="35" lengthAdjust="spacingAndGlyphs">IsScrap</text></g>
<g transform="translate(0,565)"><path class="dot" d="M981 .5H991"/><use href="#abc" x="992" y="0"/><text x="1012" y="4" textLength="30" lengthAdjust="spacingAndGlyphs">LinkID</text></g>
<g transform="translate(0,581)"><path class="dot" d="M981 .5H991"/><use href="#abc" x="992" y="0"/><text x="1012" y="4" textLength="50" lengthAdjust="spacingAndGlyphs">LinkIDPart</text></g>
<g transform="translate(0,597)"><path class="dot" d="M981 .5H991"/><use href="#abc" x="992" y="0"/><text x="1012" y="4" textLength="58" lengthAdjust="spacingAndGlyphs">LinkIDSheet</text></g>
<g transform="translate(0,613)"><path class="dot" d="M981 .5H991"/><use href="#abc" x="992" y="0"/><text x="1012" y="4" textLength="58" lengthAdjust="spacingAndGlyphs">LinkIDStack</text></g>
<g transform="translate(0,629)"><path class="dot" d="M981 .5H991"/><use href="#abc" x="992" y="0"/><text x="1012" y="4" textLength="51" lengthAdjust="spacingAndGlyphs">LinkIDStrip</text></g>
<g transform="translate(0,645)"><path class="dot" d="M981 .5H991"/><use href="#abc" x="992" y="0"/><text x="1012" y="4" textLength="110" lengthAdjust="spacingAndGlyphs">LinkIDWorkOrderBatch</text></g>
<g transform="translate(0,661)"><path class="dot" d="M981 .5H991"/><use href="#n123" x="992" y="0"/><text x="1011" y="4" textLength="86" lengthAdjust="spacingAndGlyphs">OptimizedQuantity</text></g>
<g transform="translate(0,677)"><path class="dot" d="M981 .5H991"/><use href="#chk" x="992" y="0"/><text x="1011" y="4" textLength="81" lengthAdjust="spacingAndGlyphs">OptimizerRotated</text></g>
<g transform="translate(0,693)"><path class="dot" d="M981 .5H991"/><use href="#chk" x="992" y="0"/><text x="1012" y="4" textLength="40" lengthAdjust="spacingAndGlyphs">PrintFlag</text></g>
<g transform="translate(0,709)"><path class="dot" d="M981 .5H991"/><use href="#e" x="992" y="0"/><text x="1012" y="4" textLength="91" lengthAdjust="spacingAndGlyphs">TrueShapedLength</text></g>
<g transform="translate(0,725)"><path class="dot" d="M981 .5H991"/><use href="#e" x="992" y="0"/><text x="1012" y="4" textLength="86" lengthAdjust="spacingAndGlyphs">TrueShapedWidth</text></g>
<g transform="translate(0,741)"><path class="dot" d="M981 .5H991"/><use href="#n123" x="992" y="0"/><text x="1012" y="4" textLength="23" lengthAdjust="spacingAndGlyphs">Type</text></g>
<g transform="translate(0,757)"><path class="dot" d="M981 .5H991"/><use href="#e" x="992" y="0"/><text x="1012" y="4" textLength="34" lengthAdjust="spacingAndGlyphs">XCoord</text></g>
<g transform="translate(0,773)"><path class="dot" d="M981 .5H991"/><use href="#e" x="992" y="0"/><text x="1012" y="4" textLength="34" lengthAdjust="spacingAndGlyphs">YCoord</text></g>
<g transform="translate(0,789)"><path class="dot" d="M981 .5H991"/><use href="#abc" x="992" y="0"/><text x="1012" y="4" textLength="11" lengthAdjust="spacingAndGlyphs">ID</text></g>
<g transform="translate(0,805)"><path class="dot" d="M981 .5H991"/><use href="#bin" x="992" y="0"/><text x="1012" y="4" textLength="56" lengthAdjust="spacingAndGlyphs">JPegStream</text></g>
<g transform="translate(0,821)"><path class="dot" d="M981 .5H991"/><use href="#chk" x="992" y="0"/><text x="1011" y="4" textLength="77" lengthAdjust="spacingAndGlyphs">OptimizerFlipped</text></g>
<g transform="translate(0,837)"><path class="dot" d="M981 .5H991"/><use href="#e" x="992" y="0"/><text x="1011" y="4" textLength="110" lengthAdjust="spacingAndGlyphs">OptimizerRotationAngle</text></g>
<g transform="translate(0,853)"><path class="dot" d="M981 .5H991"/><use href="#abc" x="992" y="0"/><text x="1012" y="4" textLength="45" lengthAdjust="spacingAndGlyphs">PrintFlags</text></g>
<g transform="translate(0,869)"><path class="dot" d="M981 .5H991"/><use href="#bin" x="992" y="0"/><text x="1012" y="4" textLength="47" lengthAdjust="spacingAndGlyphs">TiffStream</text></g>
<g transform="translate(0,885)"><path class="dot" d="M981 .5H991"/><use href="#abc" x="992" y="0"/><text x="1012" y="4" textLength="53" lengthAdjust="spacingAndGlyphs">WMFName</text></g>
<g transform="translate(0,901)"><path class="dot" d="M981 .5H991"/><use href="#bin" x="992" y="0"/><text x="1012" y="4" textLength="85" lengthAdjust="spacingAndGlyphs">WMFNameFromS</text></g>
</g>

<!-- options -->
<rect x="915.500" y="900.500" width="12" height="12" fill="#fff" stroke="#aaa"/><text x="933" y="911" textLength="134" lengthAdjust="spacingAndGlyphs">Create Field on Double Click</text>
<rect x="915.500" y="916.500" width="12" height="12" fill="#fff" stroke="#aaa"/><text x="933" y="927" textLength="61" lengthAdjust="spacingAndGlyphs">Create Label</text>
<rect x="915.500" y="932.500" width="12" height="12" fill="#fff" stroke="#aaa"/><text x="934" y="943" textLength="55" lengthAdjust="spacingAndGlyphs">Use Aliases</text>

<!-- bottom panel tabs -->
<rect x="908" y="949" width="390" height="25" fill="#fff"/>
<rect x="909" y="948" width="1" height="3" fill="#c8c8c8"/><rect x="1291" y="948" width="1" height="3" fill="#c8c8c8"/>
<path d="M918 958V968H930V958Z" fill="#fff" stroke="#888"/><path d="M918 957L926 953H933L930 958H918Z" fill="#e8c070"/><path d="M921 961H928M921 964H928" stroke="#888"/>
<text x="940" y="964" textLength="47" lengthAdjust="spacingAndGlyphs">Properties</text>
<rect x="995" y="948" width="1" height="21" fill="#d8d8d8"/><rect x="1076" y="948" width="1" height="21" fill="#d8d8d8"/>
<rect x="995" y="969" width="82" height="2" fill="#2b579a"/>
<rect x="1001.500" y="958.500" width="4" height="7" fill="#fff" stroke="#2b579a"/><rect x="1006.500" y="954.500" width="6" height="10" fill="#fff" stroke="#555"/><rect x="1002" y="959" width="3" height="2" fill="#2b579a"/>
<text x="1022" y="964" textLength="47" lengthAdjust="spacingAndGlyphs" style="fill:#2b579a">Dictionary</text>
<rect x="1082.500" y="954.500" width="13" height="13" fill="#fff" stroke="#666"/><path d="M1085 957.500H1090M1086 960.500H1093M1086 963.500H1093M1085.500 958V964" stroke="#444"/>
<text x="1104" y="964" textLength="57" lengthAdjust="spacingAndGlyphs">Report Tree</text>

<!-- arrow -->
<path d="M811 424L968 399" stroke="#777" stroke-width="4" filter="url(#bl)" fill="none"/>
<path d="M806 418L960 394" stroke="#c00010" stroke-width="2" fill="none"/>
<path d="M957.500 388L968 392L958.500 399Z" fill="#c00010"/>

<!-- status bar -->
<rect x="0" y="974" width="1299" height="29" fill="#2b579a"/>
<g>
<text x="13" y="992" class="w" textLength="34" lengthAdjust="spacingAndGlyphs">Inches</text>
<path d="M58 989H63L60.500 986Z" fill="#fff"/>
<rect x="68" y="979" width="1" height="16" fill="#8ea5c8"/>
<path d="M79 982L86 988L79 994Z" fill="#fff"/>
<text x="95" y="992" class="w" textLength="85" lengthAdjust="spacingAndGlyphs">Check for Issues</text>
<rect x="188" y="979" width="1" height="16" fill="#8ea5c8"/>
<text x="196" y="992" class="w" textLength="31" lengthAdjust="spacingAndGlyphs">Page1</text>
<rect x="236" y="979" width="1" height="16" fill="#8ea5c8"/>
<text x="241" y="992" class="w" textLength="68" lengthAdjust="spacingAndGlyphs">X:3.68  Y:4.98</text>
<rect x="997" y="976" width="1" height="24" fill="#8ea5c8"/>
<rect x="1006" y="982" width="14" height="12" fill="#dfe6f0" stroke="#fff"/><path d="M1008 988H1018M1010 985L1007 988L1010 991M1016 985L1019 988L1016 991" stroke="#2b579a" fill="none"/>
<rect x="1029" y="982" width="13" height="13" fill="#dfe6f0" stroke="#fff"/><path d="M1035.500 984V993M1033 986L1035.500 983L1038 986M1033 991L1035.500 994L1038 991M1031 988.500H1040" stroke="#2b579a" fill="none"/>
<rect x="1050.500" y="982" width="12" height="13" fill="#dfe6f0" stroke="#fff"/><rect x="1053" y="984.500" width="7" height="8" fill="none" stroke="#2b579a"/><path d="M1054 987H1059M1054 989.500H1059" stroke="#2b579a"/>
<path d="M1072.500 981V995H1082V987L1078 981Z" fill="#dfe6f0" stroke="#fff"/><path d="M1074 985H1078M1074 988H1080" stroke="#2b579a"/>
<rect x="1074" y="989" width="14" height="7" fill="#fff"/><text x="1075" y="995" style="font-size:7px;font-weight:bold;fill:#2b579a">100</text>
<text x="1098" y="992" class="w" textLength="28" lengthAdjust="spacingAndGlyphs">100%</text>
<rect x="1139" y="987" width="7" height="2" fill="#fff"/>
<rect x="1151" y="988" width="96" height="1" fill="#a8bbd8"/>
<path d="M1196 982H1203V990L1199.500 994L1196 990Z" fill="#fff"/>
<path d="M1255.500 984V992M1251.500 988H1259.500" stroke="#fff" stroke-width="2"/>
<g fill="#c4d0e4"><rect x="1293" y="988" width="2" height="2"/><rect x="1289" y="992" width="2" height="2"/><rect x="1293" y="992" width="2" height="2"/><rect x="1285" y="996" width="2" height="2"/><rect x="1289" y="996" width="2" height="2"/><rect x="1293" y="996" width="2" height="2"/></g>
</g>
</svg>
</body></html>
